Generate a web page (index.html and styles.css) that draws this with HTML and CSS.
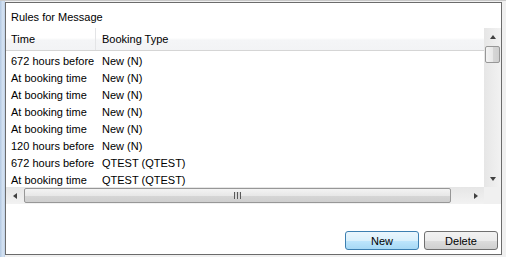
FILE: index.html
```
<!DOCTYPE html>
<html lang="en">
<head>
  <meta charset="UTF-8">
  <title>Rules for Message</title>
  <link rel="stylesheet" href="styles.css">
</head>
<body>
  <div class="window">
    <div class="edge"></div>
    <section class="panel">
      <div class="panel-title">Rules for Message</div>

      <div class="list">
        <div class="list-view">
          <div class="list-head">
            <div class="col-time">Time</div>
            <div class="col-type">Booking Type</div>
          </div>
          <div class="list-body">
            <div class="row"><div class="col-time">672 hours before</div><div class="col-type">New (N)</div></div>
            <div class="row"><div class="col-time">At booking time</div><div class="col-type">New (N)</div></div>
            <div class="row"><div class="col-time">At booking time</div><div class="col-type">New (N)</div></div>
            <div class="row"><div class="col-time">At booking time</div><div class="col-type">New (N)</div></div>
            <div class="row"><div class="col-time">At booking time</div><div class="col-type">New (N)</div></div>
            <div class="row"><div class="col-time">120 hours before</div><div class="col-type">New (N)</div></div>
            <div class="row"><div class="col-time">672 hours before</div><div class="col-type">QTEST (QTEST)</div></div>
            <div class="row"><div class="col-time">At booking time</div><div class="col-type">QTEST (QTEST)</div></div>
          </div>
        </div>

        <div class="vscroll">
          <div class="arrow"><span class="tri up"></span></div>
          <div class="track">
            <div class="thumb-v"></div>
          </div>
          <div class="arrow"><span class="tri down"></span></div>
        </div>

        <div class="hscroll">
          <div class="arrow"><span class="tri left"></span></div>
          <div class="track">
            <div class="thumb-h"><span class="grip"></span></div>
          </div>
          <div class="arrow"><span class="tri right"></span></div>
        </div>

        <div class="corner"></div>
      </div>

      <div class="actions">
        <button class="btn btn-default">New</button>
        <button class="btn">Delete</button>
      </div>
    </section>
  </div>
</body>
</html>
```

FILE: styles.css
```
html, body {
  margin: 0;
  height: 100%;
}
body {
  font-family: 'Liberation Sans', Arial, sans-serif;
  font-size: 11px;
  color: #000;
  background-color: #f0f0f0;
  overflow: hidden;
}
.window {
  display: flex;
  height: 257px;
  border-top: 1px solid #c8c8c8;
  box-sizing: border-box;
}
.edge {
  width: 5px;
  background: linear-gradient(to right, #b4c9e2, #d7e4f3 60%, #bccfe6);
}
.panel {
  width: 497px;
  height: 253px;
  margin-top: 1px;
  border: 1px solid #6b6b6b;
  box-sizing: border-box;
  background-color: #fff;
  display: flex;
  flex-direction: column;
}
.panel-title {
  height: 25px;
  padding: 8px 0 0 5px;
  box-sizing: border-box;
  line-height: 13px;
}

/* list view with scrollbars */
.list {
  display: grid;
  grid-template-columns: 478px 17px;
  grid-template-rows: 159px 17px;
  height: 176px;
}
.list-view {
  overflow: hidden;
}
.list-head {
  display: flex;
  height: 23px;
  line-height: 23px;
  background: linear-gradient(#fff, #fff 45%, #f4f5f7 55%, #f2f3f5);
  border-bottom: 1px solid #d5d5d5;
  box-sizing: border-box;
}
.list-head .col-time {
  border-right: 1px solid #e3e4e6;
}
.col-time {
  width: 90px;
  padding-left: 5px;
  box-sizing: border-box;
  white-space: nowrap;
}
.col-type {
  padding-left: 6px;
  white-space: nowrap;
}
.list-body {
  padding-top: 2px;
}
.row {
  display: flex;
  height: 17px;
  line-height: 17px;
}

.vscroll,
.hscroll {
  display: flex;
  background: #eaeaea;
}
.vscroll {
  flex-direction: column;
  background: linear-gradient(to right, #e6e6e6, #f2f2f2);
}
.hscroll {
  background: linear-gradient(#e6e6e6, #f2f2f2);
}
.arrow {
  width: 17px;
  height: 17px;
  display: flex;
  align-items: center;
  justify-content: center;
  flex: none;
}
.track {
  flex: 1;
  display: flex;
}
.vscroll .track {
  flex-direction: column;
}
.thumb-v {
  margin: 1px 1px 0 1px;
  height: 15px;
  border: 1px solid #979797;
  border-radius: 2px;
  background: linear-gradient(to right, #f3f3f3, #e8e8e8 50%, #d6d6d6 51%, #cfcfcf);
}
.thumb-h {
  margin: 1px 16px 1px 1px;
  flex: 1;
  border: 1px solid #979797;
  border-radius: 2px;
  background: linear-gradient(#f3f3f3, #e8e8e8 50%, #d6d6d6 51%, #cfcfcf);
  display: flex;
  align-items: center;
  justify-content: center;
}
.grip {
  width: 7px;
  height: 7px;
  background: repeating-linear-gradient(to right, #5a5a5a 0 1px, #d8d8d8 1px 3px);
}
.corner {
  background: #f0f0f0;
}
.tri {
  width: 0;
  height: 0;
  border-style: solid;
}
.tri.up {
  border-width: 0 3.5px 4px 3.5px;
  border-color: transparent transparent #404040 transparent;
}
.tri.down {
  border-width: 4px 3.5px 0 3.5px;
  border-color: #404040 transparent transparent transparent;
}
.tri.left {
  border-width: 3.5px 4px 3.5px 0;
  border-color: transparent #404040 transparent transparent;
}
.tri.right {
  border-width: 3.5px 0 3.5px 4px;
  border-color: transparent transparent transparent #404040;
}

/* buttons */
.actions {
  display: flex;
  justify-content: flex-end;
  gap: 5px;
  padding: 27px 3px 0 0;
}
.btn {
  width: 74px;
  height: 19px;
  padding: 0;
  font-family: inherit;
  font-size: 11px;
  color: #000;
  border: 1px solid #707070;
  border-radius: 3px;
  background: linear-gradient(#f2f2f2, #ebebeb 50%, #dddddd 51%, #cfcfcf);
}
.btn-default {
  border-color: #3c7fb1;
  background: linear-gradient(#eaf6fd, #d9f0fc 50%, #bee6fd 51%, #a7d9f5);
}
```
